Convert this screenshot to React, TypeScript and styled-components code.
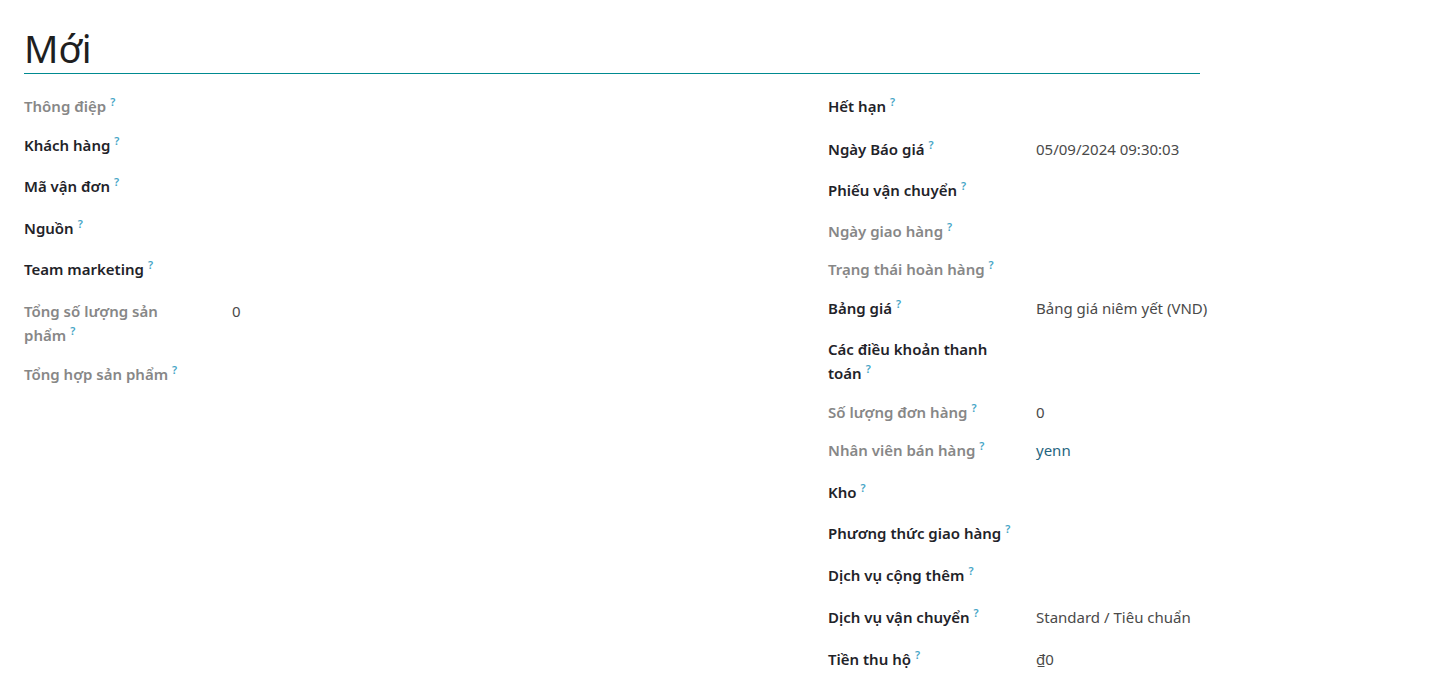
import React from "react";
import styled, { createGlobalStyle } from "styled-components";

const Global = createGlobalStyle`
  html, body { margin: 0; padding: 0; background: #fff; }
  body { font-family: "Noto Sans", "Open Sans", sans-serif; color: #212529; }
`;

const Sheet = styled.div`
  padding: 24px 0 0 24px;
`;

const Title = styled.h1`
  margin: 0;
  width: 1176px;
  font-size: 38px;
  font-weight: 400;
  line-height: 48px;
  color: #1f1f1f;
  padding-bottom: 1px;
`;

const Rule = styled.div`
  width: 1176px;
  height: 1px;
  background: #008a90;
`;

const Columns = styled.div`
  display: grid;
  grid-template-columns: 804px 1fr;
  margin-top: 20px;
`;

const Group = styled.div`
  display: flex;
  flex-direction: column;
`;

const Row = styled.div<{ $h: number }>`
  display: grid;
  grid-template-columns: 208px 1fr;
  height: ${(p) => p.$h}px;
  font-size: 15px;
  line-height: 24px;
`;

const Label = styled.div<{ $muted?: boolean }>`
  font-weight: 600;
  color: ${(p) => (p.$muted ? "#878787" : "#1f2329")};
  padding-right: 24px;
`;

const Help = styled.sup`
  font-size: 11px;
  font-weight: 600;
  color: #46a5c6;
  margin-left: 4px;
  vertical-align: 6px;
  line-height: 0;
`;

const Value = styled.div<{ $link?: boolean }>`
  color: ${(p) => (p.$link ? "#1f6580" : "#4a4a4a")};
  font-weight: 400;
`;

type Field = { label: string; value?: string; muted?: boolean; link?: boolean; h: number };

const left: Field[] = [
  { label: "Thông điệp", muted: true, h: 39 },
  { label: "Khách hàng", h: 41 },
  { label: "Mã vận đơn", h: 42 },
  { label: "Nguồn", h: 41 },
  { label: "Team marketing", h: 42 },
  { label: "Tổng số lượng sản phẩm", muted: true, value: "0", h: 63 },
  { label: "Tổng hợp sản phẩm", muted: true, h: 40 },
];

const right: Field[] = [
  { label: "Hết hạn", h: 43 },
  { label: "Ngày Báo giá", value: "05/09/2024 09:30:03", h: 41 },
  { label: "Phiếu vận chuyển", h: 41 },
  { label: "Ngày giao hàng", muted: true, h: 38 },
  { label: "Trạng thái hoàn hàng", muted: true, h: 39 },
  { label: "Bảng giá", value: "Bảng giá niêm yết (VND)", h: 41 },
  { label: "Các điều khoản thanh toán", h: 63 },
  { label: "Số lượng đơn hàng", muted: true, value: "0", h: 38 },
  { label: "Nhân viên bán hàng", muted: true, value: "yenn", link: true, h: 42 },
  { label: "Kho", h: 41 },
  { label: "Phương thức giao hàng", h: 42 },
  { label: "Dịch vụ cộng thêm", h: 42 },
  { label: "Dịch vụ vận chuyển", value: "Standard / Tiêu chuẩn", h: 42 },
  { label: "Tiền thu hộ", value: "₫0", h: 40 },
];

function FieldRow({ f }: { f: Field }) {
  return (
    <Row $h={f.h}>
      <Label $muted={f.muted}>
        {f.label}
        <Help>?</Help>
      </Label>
      <Value $link={f.link}>{f.value ?? ""}</Value>
    </Row>
  );
}

export default function App() {
  return (
    <>
      <Global />
      <Sheet>
        <Title>Mới</Title>
        <Rule />
        <Columns>
          <Group>
            {left.map((f) => (
              <FieldRow key={f.label} f={f} />
            ))}
          </Group>
          <Group>
            {right.map((f) => (
              <FieldRow key={f.label} f={f} />
            ))}
          </Group>
        </Columns>
      </Sheet>
    </>
  );
}
